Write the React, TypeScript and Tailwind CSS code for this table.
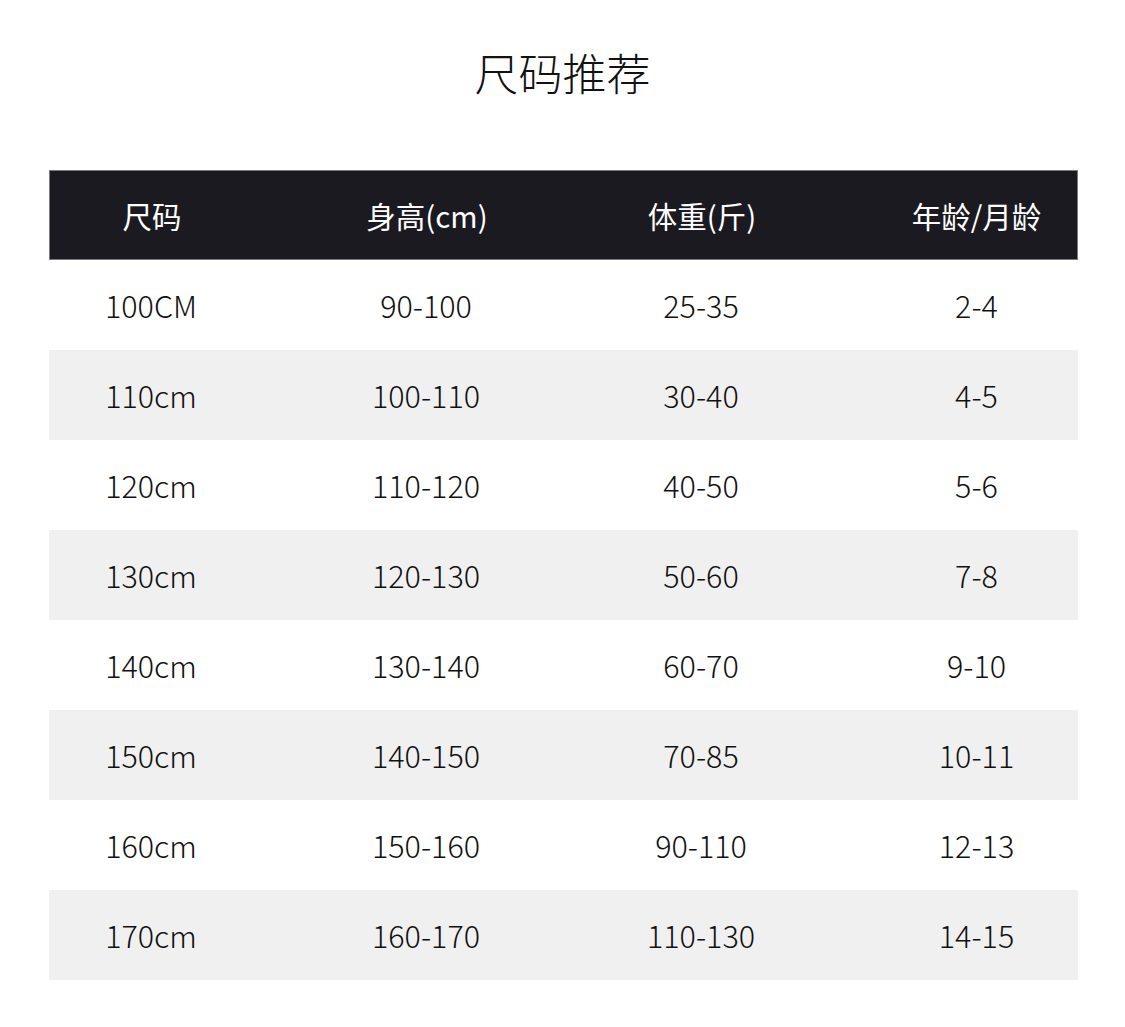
import React from "react"

const rows = [
  ["100CM", "90-100", "25-35", "2-4"],
  ["110cm", "100-110", "30-40", "4-5"],
  ["120cm", "110-120", "40-50", "5-6"],
  ["130cm", "120-130", "50-60", "7-8"],
  ["140cm", "130-140", "60-70", "9-10"],
  ["150cm", "140-150", "70-85", "10-11"],
  ["160cm", "150-160", "90-110", "12-13"],
  ["170cm", "160-170", "110-130", "14-15"],
]

const headers = ["尺码", "身高(cm)", "体重(斤)", "年龄/月龄"]

const font = { fontFamily: '"Noto Sans CJK SC", "Noto Sans", sans-serif' }

const Row = ({ cells, className }: { cells: string[]; className: string }) => (
  <div className={`grid h-[90px] grid-cols-[204px_346px_204px_1fr] items-center ${className}`}>
    <div className="text-center">{cells[0]}</div>
    <div className="text-center">{cells[1]}</div>
    <div className="text-center">{cells[2]}</div>
    <div className="pl-[72px] text-center">{cells[3]}</div>
  </div>
)

const App = () => {
  return (
    <div className="min-h-[1027px] w-[1125px] bg-white" style={font}>
      <div className="pt-[50px]">
        <h1 className="h-[44px] text-center text-[44px] leading-[44px] font-light text-[#111]">
          尺码推荐
        </h1>
      </div>

      <div className="mx-[49px] mt-[76px] w-[1029px]">
        <Row
          cells={headers}
          className="border border-[#7a7a7a] bg-[#1b1a21] text-[29.5px] font-normal text-white"
        />
        {rows.map((r, i) => (
          <Row
            key={r[0]}
            cells={r}
            className={`text-[30.5px] leading-[30px] font-light text-[#111] ${i % 2 === 1 ? "bg-[#f0f0f0]" : "bg-white"}`}
          />
        ))}
      </div>
    </div>
  )
}

export default App
